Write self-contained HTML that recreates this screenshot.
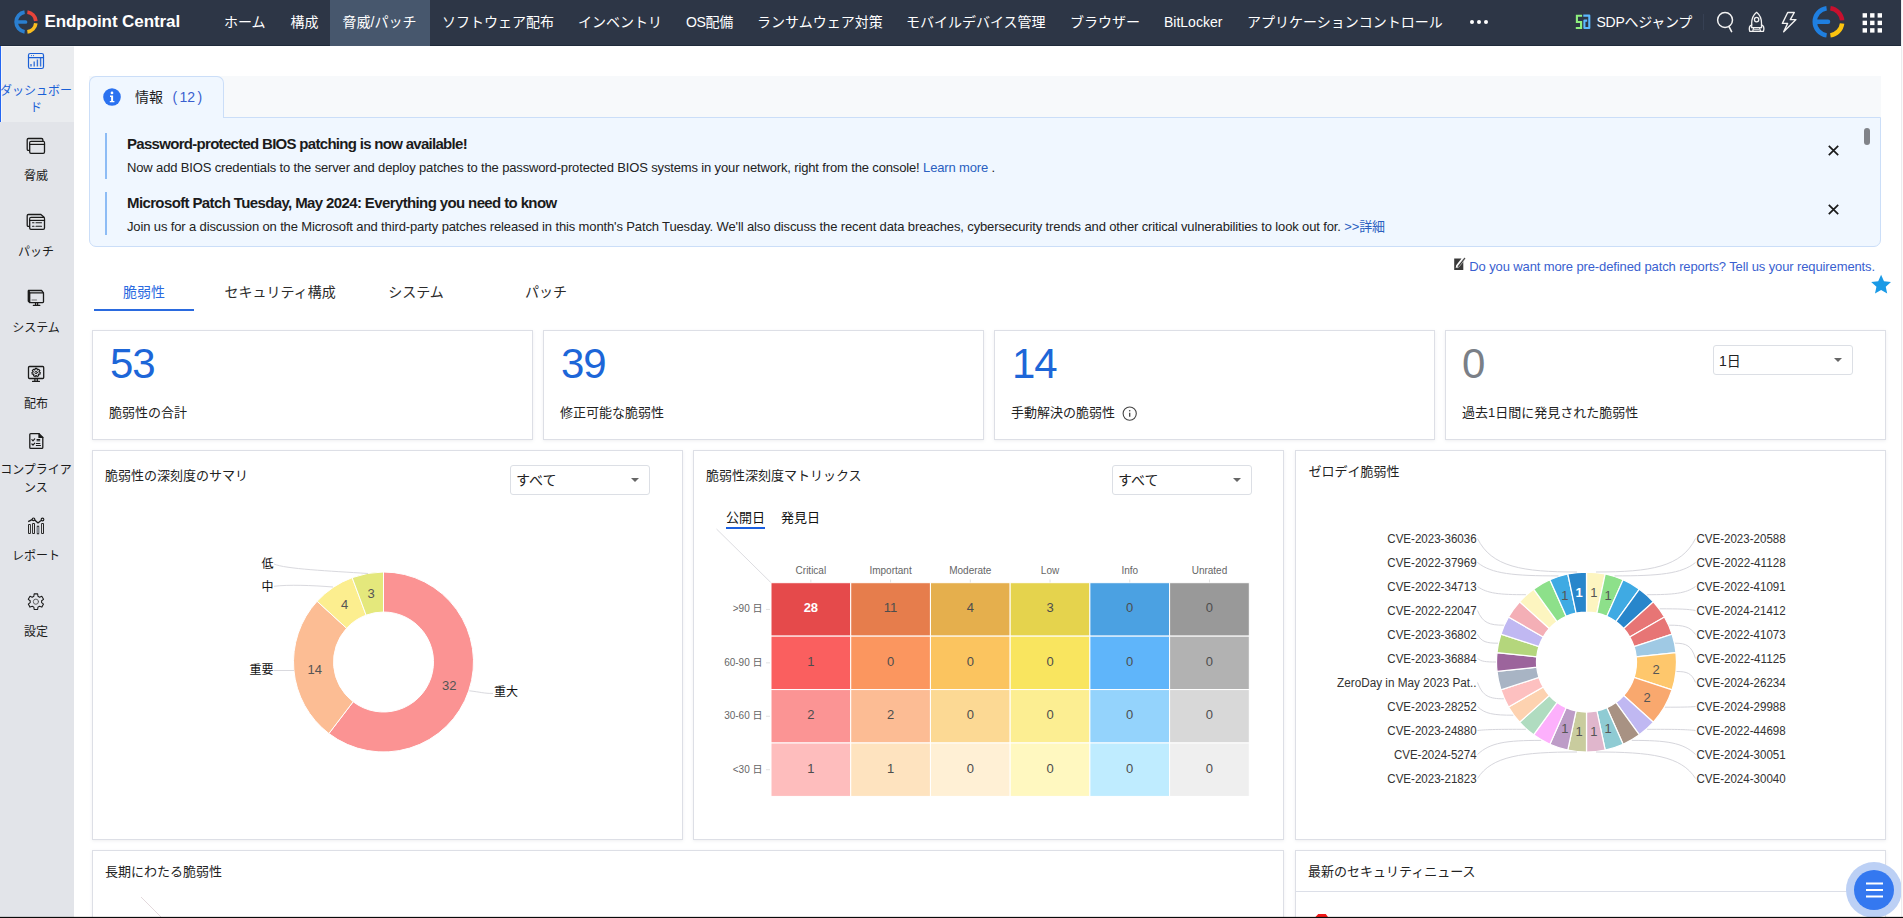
<!DOCTYPE html>
<html lang="ja"><head><meta charset="utf-8"><title>Endpoint Central</title>
<style>
html,body{margin:0;padding:0}
body{width:1903px;height:918px;overflow:hidden;position:relative;background:#fff;font-family:"Liberation Sans","Noto Sans CJK JP",sans-serif;font-size:13px;color:#222;-webkit-font-smoothing:antialiased}
.a{position:absolute}
.t{position:absolute;white-space:nowrap;line-height:20px;height:20px}
.nav{left:0;top:0;width:1901px;height:45px;background:#2d3646;border-bottom:1px solid #1f2a3a}
.nav .t{color:#fff;font-size:14px;line-height:20px}
.side{left:0;top:46px;width:74px;height:872px;background:#e2e4e9}
.side .t{font-size:12px;color:#1b1b1b;width:72px;text-align:center;left:0}
.card{position:absolute;background:#fff;border:1px solid #dddfe6;box-shadow:0 1px 3px rgba(120,130,150,.13);box-sizing:border-box}
.sel{position:absolute;box-sizing:border-box;border:1px solid #dcdfe5;border-radius:3px;background:#fff}
.sel i{position:absolute;width:0;height:0;border-left:4px solid transparent;border-right:4px solid transparent;border-top:4.5px solid #666}
svg{position:absolute;overflow:visible}
</style></head><body>
<div class="a nav">
<div class="a" style="left:330px;top:0;width:100px;height:46px;background:#47576d"></div>
<svg class="a" style="left:0;top:0" width="1" height="1"><path d="M24.62 12.20 A9.9 9.9 0 0 0 24.62 31.80" fill="none" stroke="#2a7fd0" stroke-width="3.7"/><path d="M17.95 22.00 H25.50" fill="none" stroke="#2a7fd0" stroke-width="3.7" stroke-linecap="round"/><path d="M27.38 12.20 A9.9 9.9 0 0 1 35.85 20.97" fill="none" stroke="#e8443a" stroke-width="3.7"/><path d="M35.83 23.21 A9.9 9.9 0 0 1 27.38 31.80" fill="none" stroke="#f9bd1f" stroke-width="3.7"/></svg>
<div class="t" style="letter-spacing:-0.085px;left:44.5px;top:9.7px;font-size:17px;line-height:24px;height:24px;color:#fff;font-weight:bold;">Endpoint Central</div>
<div class="t" style="left:224px;top:11.5px;font-size:14px;">ホーム</div>
<div class="t" style="left:290.5px;top:11.5px;font-size:14px;">構成</div>
<div class="t" style="left:342.5px;top:11.5px;font-size:14px;">脅威/パッチ</div>
<div class="t" style="left:442px;top:11.5px;font-size:14px;">ソフトウェア配布</div>
<div class="t" style="left:578px;top:11.5px;font-size:14px;">インベントリ</div>
<div class="t" style="letter-spacing:-0.309px;left:686px;top:11.5px;font-size:14px;">OS配備</div>
<div class="t" style="left:757px;top:11.5px;font-size:14px;">ランサムウェア対策</div>
<div class="t" style="left:906px;top:11.5px;font-size:14px;">モバイルデバイス管理</div>
<div class="t" style="left:1070px;top:11.5px;font-size:14px;">ブラウザー</div>
<div class="t" style="left:1164px;top:11.5px;font-size:14px;">BitLocker</div>
<div class="t" style="left:1247px;top:11.5px;font-size:14px;">アプリケーションコントロール</div>
<svg class="a" style="left:0;top:0" width="1" height="1"><circle cx="1472" cy="22" r="2" fill="#fff"/><circle cx="1479" cy="22" r="2" fill="#fff"/><circle cx="1486" cy="22" r="2" fill="#fff"/></svg>
<svg class="a" style="left:0;top:0" width="1" height="1" fill="none" stroke-width="2.100"><path d="M1582.100 15.700H1576.900V22H1581.100V28H1575.800" stroke="#8ef07e"/><path d="M1583.300 15.600H1589.300V28H1584.400V20.600H1587.200" stroke="#5cb8ff" stroke-linejoin="round"/></svg>
<div class="t" style="letter-spacing:-0.271px;left:1596.5px;top:11.5px;font-size:14px;">SDPへジャンプ</div>
<div class="a" style="left:1703px;top:14px;width:1px;height:16px;background:#364053"></div>
<svg class="a" style="left:0;top:0" width="1" height="1" fill="none" stroke="#f2f2f2" stroke-linejoin="round" stroke-linecap="round"><circle cx="1725.050" cy="20.050" r="7.450" stroke-width="1.500"/><path d="M1729 26.600L1731.600 31.600" stroke-width="1.600"/><g stroke-width="1.300"><path d="M1756.600 12.300C1753.600 14.800 1751.700 18.800 1751.700 23V27.700H1761.500V23C1761.500 18.800 1759.600 14.800 1756.600 12.300Z"/><circle cx="1756.600" cy="19.600" r="2.200"/><path d="M1751.700 24.800C1749.600 25.600 1748.900 28.300 1749.700 31.300H1752.700L1753.700 27.700M1761.500 24.800C1763.600 25.600 1764.300 28.300 1763.500 31.300H1760.500L1759.500 27.700M1752.700 31.300H1760.500"/><path d="M1754 29.500H1759.200" stroke="#b9bcc2" stroke-width="1.600" stroke-linecap="butt"/></g><path d="M1787.700 12.500H1794.300L1790.300 19.600H1796L1783.700 31.800L1787.600 23.400H1782.400Z" stroke-width="1.400"/></svg>
<svg class="a" style="left:0;top:0" width="1" height="1"><path d="M1826.59 8.23 A13.7 13.7 0 0 0 1826.59 35.37" fill="none" stroke="#1f7fe0" stroke-width="4.5"/><path d="M1817.05 21.80 H1828.00" fill="none" stroke="#1f7fe0" stroke-width="4.5" stroke-linecap="round"/><path d="M1830.41 8.23 A13.7 13.7 0 0 1 1842.12 20.37" fill="none" stroke="#c8102e" stroke-width="4.5"/><path d="M1842.10 23.47 A13.7 13.7 0 0 1 1830.41 35.37" fill="none" stroke="#fcc40f" stroke-width="4.5"/></svg>
<svg class="a" style="left:0;top:0" width="1" height="1"><rect x="1862.6" y="13.2" width="4.4" height="4.4" fill="#fff"/><rect x="1870.1" y="13.2" width="4.4" height="4.4" fill="#fff"/><rect x="1877.6" y="13.2" width="4.4" height="4.4" fill="#fff"/><rect x="1862.6" y="20.7" width="4.4" height="4.4" fill="#fff"/><rect x="1870.1" y="20.7" width="4.4" height="4.4" fill="#fff"/><rect x="1877.6" y="20.7" width="4.4" height="4.4" fill="#fff"/><rect x="1862.6" y="28.2" width="4.4" height="4.4" fill="#fff"/><rect x="1870.1" y="28.2" width="4.4" height="4.4" fill="#fff"/><rect x="1877.6" y="28.2" width="4.4" height="4.4" fill="#fff"/></svg>
</div>
<div class="a side"></div>
<div class="a" style="left:0;top:46px;width:74px;height:76px;box-sizing:border-box;background:#eaecef;border-left:1px solid #2466f2;box-shadow:inset 1px 1px 0 #f5f6f8"></div>
<div class="a side" style="background:none">
<div class="t" style="left:0px;top:36.5px;font-size:12px;line-height:16px;height:16px;color:#1a5fd6;">ダッシュボー</div>
<div class="t" style="left:0px;top:54.0px;font-size:12px;line-height:16px;height:16px;color:#1a5fd6;">ド</div>
<div class="t" style="left:0px;top:121.5px;font-size:12px;line-height:16px;height:16px;">脅威</div>
<div class="t" style="left:0px;top:197.7px;font-size:12px;line-height:16px;height:16px;">パッチ</div>
<div class="t" style="left:0px;top:274.0px;font-size:12px;line-height:16px;height:16px;">システム</div>
<div class="t" style="left:0px;top:350.0px;font-size:12px;line-height:16px;height:16px;">配布</div>
<div class="t" style="left:0px;top:416.0px;font-size:12px;line-height:16px;height:16px;">コンプライア</div>
<div class="t" style="left:0px;top:434.0px;font-size:12px;line-height:16px;height:16px;">ンス</div>
<div class="t" style="left:0px;top:502.0px;font-size:12px;line-height:16px;height:16px;">レポート</div>
<div class="t" style="left:0px;top:578.0px;font-size:12px;line-height:16px;height:16px;">設定</div>
</div>
<svg class="a" style="left:0;top:0" width="74" height="918" viewBox="0 0 74 918" fill="none" stroke-linejoin="round" stroke-linecap="round">
<g stroke="#1a5fd6" stroke-width="1.200"><rect x="28.500" y="53.500" width="15" height="15" rx="1.800"/><path d="M28.500 57.700h15"/><path d="M31.400 55.600h.1M33.400 55.600h.1" stroke-width="1"/><path d="M31 66.500v-2.500M34.200 66.500v-5M37.400 66.500v-7M40.600 66.500v-8.500" stroke-width="1.400" stroke-linecap="butt" opacity=".85"/></g>
<g stroke="#1b1b1b" stroke-width="1.300"><path d="M29.400 150.400h-1a1.200 1.200 0 0 1-1.200-1.200v-9.500a1.200 1.200 0 0 1 1.200-1.200h13a1.500 1.500 0 0 1 1.500 1.500v1.200"/><rect x="29.700" y="141.500" width="14.800" height="11.800" rx="1.300"/><rect x="30.400" y="142.200" width="13.400" height="1.600" fill="#fff" stroke="none" opacity=".8"/><path d="M29.700 144.300h14.800"/></g>
<g stroke="#1b1b1b" stroke-width="1.300"><path d="M29.400 226.400h-1a1.200 1.200 0 0 1-1.200-1.200v-9.500a1.200 1.200 0 0 1 1.200-1.200h12.500l3.200 2.800"/><rect x="29.700" y="217.500" width="14.800" height="11.800" rx="1.300"/><rect x="30.400" y="218.200" width="13.400" height="1.600" fill="#fff" stroke="none" opacity=".8"/><path d="M29.700 220.300h14.800"/><path d="M32.500 222.700h1.500M36 222.700h5.500M32.500 226.300h1.500M36 226.300h5.500" stroke-width="1.100"/></g>
<g stroke="#1b1b1b" stroke-width="1.300"><rect x="29.700" y="292.800" width="13.800" height="9.800" rx=".8"/><path d="M29.700 292.800l-1.300-1.300v9.800l1.300 1.300M28.400 290.500h13.200l1.900 2.300M28.400 290.500v1" /><path d="M28.800 291.500v9.500" stroke-width="1.900"/><path d="M35.600 302.600v2.600M37.600 302.600v2.600M33.400 305.400h6.400"/><path d="M32 300h4.500" stroke-width="1" opacity=".6"/></g>
<g stroke="#1b1b1b" stroke-width="1.300"><rect x="28.500" y="366.500" width="15.200" height="12" rx="1"/><path d="M34.900 378.500v2.700M37.300 378.500v2.700M32.600 381.400h6.800"/><path d="M35.04 369.69 L35.18 368.40 L37.02 368.40 L37.16 369.69 L37.64 369.92 L38.73 369.23 L39.88 370.66 L38.95 371.58 L39.07 372.09 L40.30 372.52 L39.89 374.31 L38.60 374.16 L38.27 374.57 L38.70 375.80 L37.05 376.59 L36.37 375.49 L35.83 375.49 L35.15 376.59 L33.50 375.80 L33.93 374.57 L33.60 374.16 L32.31 374.31 L31.90 372.52 L33.13 372.09 L33.25 371.58 L32.32 370.66 L33.47 369.23 L34.56 369.92Z" stroke-width="1.100"/><circle cx="36.100" cy="372.500" r="1.200" stroke-width=".9"/></g>
<g stroke="#1b1b1b" stroke-width="1.300"><path d="M30.800 433.600h8.200l3.800 3.800v10a1 1 0 0 1-1 1h-11a1 1 0 0 1-1-1v-12.800a1 1 0 0 1 1-1z"/><path d="M39 433.600v3.800h3.800" fill="#1b1b1b"/><path d="M31.900 439.700l1.100 1.100 1.700-1.900M31.900 444l1.100 1.100 1.700-1.900" stroke-width="1.200"/><path d="M37 439.500h2.800M37 440.800h2.800M36.300 443.500h3.600M36.300 445.500h4.200" stroke-width="1"/></g>
<g stroke="#1b1b1b" stroke-width=".950" stroke-linecap="butt"><rect x="28.500" y="524.500" width="1.900" height="9" fill="#f4f5f7"/><rect x="32.600" y="523.500" width="1.900" height="10" fill="#f4f5f7"/><rect x="36.500" y="526.300" width="3" height="7.400" rx=".8" fill="#868991" stroke="none"/><path d="M36.900 526.200h2.200M36.900 533.700h2.200" stroke-width="1.100"/><rect x="41.600" y="523.500" width="1.900" height="10" fill="#f4f5f7"/><path d="M28.200 521.600l3.900-2M34.700 520.100l3.300 2.800 3-2.300" stroke-width="1.300"/><circle cx="33.500" cy="519.300" r="1.350" stroke-width="1.100"/><circle cx="42.500" cy="519.500" r="1.350" stroke-width="1.100"/></g>
<g stroke="#1b1b1b" stroke-width="1.050"><path d="M33.86 596.27 L34.15 593.89 L37.65 593.89 L37.94 596.27 L39.58 597.22 L41.79 596.28 L43.53 599.31 L41.62 600.76 L41.62 602.64 L43.53 604.09 L41.79 607.12 L39.58 606.18 L37.94 607.13 L37.65 609.51 L34.15 609.51 L33.86 607.13 L32.22 606.18 L30.01 607.12 L28.27 604.09 L30.18 602.64 L30.18 600.76 L28.27 599.31 L30.01 596.28 L32.22 597.22Z" stroke-linejoin="round"/><circle cx="35.900" cy="601.700" r="2.600" stroke="#555" stroke-width=".9"/></g>
</svg>
<div class="a" style="left:89px;top:76px;width:1792px;height:42px;background:#f7f9fb"></div>
<div class="a" style="left:89px;top:117px;width:1792px;height:130px;box-sizing:border-box;background:#f0f7ff;border:1px solid #cbdef8;border-radius:0 0 7px 7px"></div>
<div class="a" style="left:89px;top:76px;width:135px;height:42px;box-sizing:border-box;background:#f0f7ff;border:1px solid #cbdef8;border-bottom:none;border-radius:7px 7px 0 0"></div>
<div class="a" style="left:90px;top:116px;width:133px;height:3px;background:#f0f7ff"></div>
<svg class="a" style="left:103.400px;top:88.300px" width="18" height="18" viewBox="0 0 18 18"><circle cx="9" cy="9" r="8.800" fill="#2b72f0"/><circle cx="9" cy="4.900" r="1.350" fill="#fff"/><path d="M7 7.600h3.100v5.400h1.300v1.300H6.800V13h1.300V8.900H7z" fill="#fff"/></svg>
<div class="t" style="left:135px;top:86.5px;font-size:14px;color:#222;">情報</div>
<div class="t" style="left:172.5px;top:86.5px;font-size:14px;color:#3a5fcf;word-spacing:-1.500px">( 12 )</div>
<div class="a" style="left:105px;top:133px;width:2px;height:46px;background:#8dbcf5"></div>
<div class="a" style="left:105px;top:192px;width:2px;height:43px;background:#8dbcf5"></div>
<div class="t" style="letter-spacing:-0.702px;left:127px;top:133.5px;font-size:15px;color:#1b1b1b;font-weight:bold;">Password-protected BIOS patching is now available!</div>
<div class="t" style="letter-spacing:-0.143px;left:127px;top:157.5px;font-size:13px;color:#222;">Now add BIOS credentials to the server and deploy patches to the password-protected BIOS systems in your network, right from the console! <span style="color:#2a5fc0">Learn more</span> .</div>
<div class="t" style="letter-spacing:-0.619px;left:127px;top:192.5px;font-size:15px;color:#1b1b1b;font-weight:bold;">Microsoft Patch Tuesday, May 2024: Everything you need to know</div>
<div class="t" style="letter-spacing:-0.131px;left:127px;top:216.5px;font-size:13px;color:#222;">Join us for a discussion on the Microsoft and third-party patches released in this month's Patch Tuesday. We'll also discuss the recent data breaches, cybersecurity trends and other critical vulnerabilities to look out for. <span style="color:#2a5fc0">&gt;&gt;詳細</span></div>
<svg class="a" style="left:1828.4px;top:144.5px" width="11" height="11" viewBox="0 0 11 11"><path d="M.8.800l9.400 9.400M10.200.800L.8 10.200" stroke="#1b1b1b" stroke-width="1.700"/></svg>
<svg class="a" style="left:1828.4px;top:203.7px" width="11" height="11" viewBox="0 0 11 11"><path d="M.8.800l9.400 9.400M10.200.800L.8 10.200" stroke="#1b1b1b" stroke-width="1.700"/></svg>
<div class="a" style="left:1864px;top:128px;width:6px;height:17px;border-radius:3px;background:#808389"></div>
<svg class="a" style="left:1453px;top:257px" width="13" height="14" viewBox="0 0 13 14"><path d="M1.200 1.500h7.300l-5.300 6.800-.5 2.800 2.600-1.200 5-6.300v9.400h-9.100z" fill="#3a3a3a"/><path d="M11.300.600l1.300 1-6.600 8.400-1.800.8.400-1.900z" fill="#3a3a3a" stroke="#fff" stroke-width=".5"/></svg>
<div class="t" style="letter-spacing:-0.116px;left:1469.3px;top:257.0px;font-size:13px;color:#3a5fd0;">Do you want more pre-defined patch reports? Tell us your requirements.</div>
<svg class="a" style="left:0;top:0" width="1" height="1"><polygon points="1881.10,274.80 1883.98,281.24 1890.99,281.99 1885.76,286.71 1887.21,293.61 1881.10,290.10 1874.99,293.61 1876.44,286.71 1871.21,281.99 1878.22,281.24" fill="#1a9ae6"/></svg>
<div class="t" style="left:94px;top:282.0px;font-size:14px;color:#2a6adf;width:100px;text-align:center;">脆弱性</div>
<div class="t" style="left:224.5px;top:282.0px;font-size:14px;color:#2b2b2b;">セキュリティ構成</div>
<div class="t" style="left:366px;top:282.0px;font-size:14px;color:#2b2b2b;width:100px;text-align:center;">システム</div>
<div class="t" style="left:496px;top:282.0px;font-size:14px;color:#2b2b2b;width:100px;text-align:center;">パッチ</div>
<div class="a" style="left:94px;top:308.500px;width:99.500px;height:2px;background:#2a6adf"></div>
<div class="card" style="left:92px;top:330px;width:441px;height:109.500px"></div>
<div class="t" style="left:110px;top:341.5px;font-size:42px;line-height:44px;height:44px;color:#1d66d8;letter-spacing:-1px;">53</div>
<div class="t" style="left:109px;top:402.8px;font-size:13px;color:#222;">脆弱性の合計</div>
<div class="card" style="left:543px;top:330px;width:441px;height:109.500px"></div>
<div class="t" style="left:561px;top:341.5px;font-size:42px;line-height:44px;height:44px;color:#1d66d8;letter-spacing:-1px;">39</div>
<div class="t" style="left:560px;top:402.8px;font-size:13px;color:#222;">修正可能な脆弱性</div>
<div class="card" style="left:994px;top:330px;width:441px;height:109.500px"></div>
<div class="t" style="left:1012px;top:341.5px;font-size:42px;line-height:44px;height:44px;color:#1d66d8;letter-spacing:-1px;">14</div>
<div class="t" style="left:1011px;top:402.8px;font-size:13px;color:#222;">手動解決の脆弱性</div>
<div class="card" style="left:1445px;top:330px;width:441px;height:109.500px"></div>
<div class="t" style="left:1462px;top:341.5px;font-size:42px;line-height:44px;height:44px;color:#7a7f87;letter-spacing:-1px;">0</div>
<div class="t" style="left:1462px;top:402.8px;font-size:13px;color:#222;">過去1日間に発見された脆弱性</div>
<svg class="a" style="left:1122px;top:406px" width="16" height="16" viewBox="0 0 16 16"><circle cx="7.700" cy="7.600" r="6.600" fill="none" stroke="#444" stroke-width="1.100"/><path d="M7.700 6.800v4" stroke="#444" stroke-width="1.300"/><circle cx="7.700" cy="4.700" r=".8" fill="#444"/></svg>
<div class="sel" style="left:1713px;top:345px;width:140px;height:30px"><i style="right:10px;top:12.0px"></i></div>
<div class="t" style="left:1719px;top:350.8px;font-size:14px;color:#222;">1日</div>
<div class="card" style="left:92px;top:450px;width:591px;height:390px"></div>
<div class="card" style="left:693px;top:450px;width:591px;height:390px"></div>
<div class="card" style="left:1295px;top:450px;width:591px;height:390px"></div>
<div class="t" style="left:105px;top:466.3px;font-size:13px;color:#222;">脆弱性の深刻度のサマリ</div>
<div class="t" style="left:706px;top:466.3px;font-size:13px;color:#222;">脆弱性深刻度マトリックス</div>
<div class="t" style="left:1308.5px;top:462.4px;font-size:13px;color:#222;">ゼロデイ脆弱性</div>
<div class="sel" style="left:510px;top:465px;width:140px;height:30px"><i style="right:10px;top:12.0px"></i></div>
<div class="t" style="left:516px;top:469.8px;font-size:14px;color:#222;">すべて</div>
<div class="sel" style="left:1112px;top:465px;width:140px;height:30px"><i style="right:10px;top:12.0px"></i></div>
<div class="t" style="left:1118px;top:469.8px;font-size:14px;color:#222;">すべて</div>
<svg class="a" style="left:0;top:0" width="1903" height="918" viewBox="0 0 1903 918" font-family='"Liberation Sans","Noto Sans CJK JP",sans-serif'>
<path d="M383.50 572.00 A90 90 0 1 1 328.89 733.54 L353.16 701.74 A50 50 0 1 0 383.50 612.00 Z" fill="#fb9393" stroke="#fff" stroke-width="1"/>
<path d="M328.89 733.54 A90 90 0 0 1 317.10 601.25 L346.61 628.25 A50 50 0 0 0 353.16 701.74 Z" fill="#fcbd94" stroke="#fff" stroke-width="1"/>
<path d="M317.10 601.25 A90 90 0 0 1 352.16 577.63 L366.09 615.13 A50 50 0 0 0 346.61 628.25 Z" fill="#fcee8f" stroke="#fff" stroke-width="1"/>
<path d="M352.16 577.63 A90 90 0 0 1 383.50 572.00 L383.50 612.00 A50 50 0 0 0 366.09 615.13 Z" fill="#e4e87c" stroke="#fff" stroke-width="1"/>
<g fill="none" stroke="#d9d9de" stroke-width="1"><path d="M469.300 690.800C480 692 484 693.500 493 693.500"/><path d="M274 670.500H294"/><path d="M274 586.300C288 584.500 312 585.300 333 587"/><path d="M274 564C285 569 330 571 368 573.500"/></g>
<text x="449.3" y="689.5" font-size="13" fill="#555" text-anchor="middle">32</text><text x="314.7" y="673.6" font-size="13" fill="#555" text-anchor="middle">14</text><text x="344.6" y="608.6" font-size="13" fill="#555" text-anchor="middle">4</text><text x="371" y="598.0" font-size="13" fill="#555" text-anchor="middle">3</text><text x="494" y="696.4" font-size="12" fill="#111" text-anchor="start">重大</text><text x="273.5" y="674.4" font-size="12" fill="#111" text-anchor="end">重要</text><text x="273.5" y="590.8" font-size="12" fill="#111" text-anchor="end">中</text><text x="273.5" y="567.6999999999999" font-size="12" fill="#111" text-anchor="end">低</text>
<path d="M716.500 529L771 582.700" stroke="#dcdce0" stroke-width="1" fill="none"/>
<rect x="771.00" y="582.70" width="79.72" height="53.43" fill="#e54a4b" stroke="#fff" stroke-width="1"/><text x="810.86" y="612.22" font-size="13" font-weight="bold" fill="#fff" text-anchor="middle">28</text><rect x="850.72" y="582.70" width="79.72" height="53.43" fill="#e67d4c" stroke="#fff" stroke-width="1"/><text x="890.58" y="612.22" font-size="13" fill="#4d4d4d" text-anchor="middle">11</text><rect x="930.44" y="582.70" width="79.72" height="53.43" fill="#e5af4d" stroke="#fff" stroke-width="1"/><text x="970.30" y="612.22" font-size="13" fill="#4d4d4d" text-anchor="middle">4</text><rect x="1010.16" y="582.70" width="79.72" height="53.43" fill="#e5d34d" stroke="#fff" stroke-width="1"/><text x="1050.02" y="612.22" font-size="13" fill="#4d4d4d" text-anchor="middle">3</text><rect x="1089.88" y="582.70" width="79.72" height="53.43" fill="#4ba1e2" stroke="#fff" stroke-width="1"/><text x="1129.74" y="612.22" font-size="13" fill="#4d4d4d" text-anchor="middle">0</text><rect x="1169.60" y="582.70" width="79.72" height="53.43" fill="#999999" stroke="#fff" stroke-width="1"/><text x="1209.46" y="612.22" font-size="13" fill="#4d4d4d" text-anchor="middle">0</text>
<rect x="771.00" y="636.13" width="79.72" height="53.43" fill="#fa5f5f" stroke="#fff" stroke-width="1"/><text x="810.86" y="665.64" font-size="13" fill="#4d4d4d" text-anchor="middle">1</text><rect x="850.72" y="636.13" width="79.72" height="53.43" fill="#fb965f" stroke="#fff" stroke-width="1"/><text x="890.58" y="665.64" font-size="13" fill="#4d4d4d" text-anchor="middle">0</text><rect x="930.44" y="636.13" width="79.72" height="53.43" fill="#fbc45f" stroke="#fff" stroke-width="1"/><text x="970.30" y="665.64" font-size="13" fill="#4d4d4d" text-anchor="middle">0</text><rect x="1010.16" y="636.13" width="79.72" height="53.43" fill="#f9e55f" stroke="#fff" stroke-width="1"/><text x="1050.02" y="665.64" font-size="13" fill="#4d4d4d" text-anchor="middle">0</text><rect x="1089.88" y="636.13" width="79.72" height="53.43" fill="#5fb5fa" stroke="#fff" stroke-width="1"/><text x="1129.74" y="665.64" font-size="13" fill="#4d4d4d" text-anchor="middle">0</text><rect x="1169.60" y="636.13" width="79.72" height="53.43" fill="#b2b2b2" stroke="#fff" stroke-width="1"/><text x="1209.46" y="665.64" font-size="13" fill="#4d4d4d" text-anchor="middle">0</text>
<rect x="771.00" y="689.56" width="79.72" height="53.43" fill="#fb9494" stroke="#fff" stroke-width="1"/><text x="810.86" y="719.08" font-size="13" fill="#4d4d4d" text-anchor="middle">2</text><rect x="850.72" y="689.56" width="79.72" height="53.43" fill="#fcbc94" stroke="#fff" stroke-width="1"/><text x="890.58" y="719.08" font-size="13" fill="#4d4d4d" text-anchor="middle">2</text><rect x="930.44" y="689.56" width="79.72" height="53.43" fill="#fcd994" stroke="#fff" stroke-width="1"/><text x="970.30" y="719.08" font-size="13" fill="#4d4d4d" text-anchor="middle">0</text><rect x="1010.16" y="689.56" width="79.72" height="53.43" fill="#fcee92" stroke="#fff" stroke-width="1"/><text x="1050.02" y="719.08" font-size="13" fill="#4d4d4d" text-anchor="middle">0</text><rect x="1089.88" y="689.56" width="79.72" height="53.43" fill="#94d3fc" stroke="#fff" stroke-width="1"/><text x="1129.74" y="719.08" font-size="13" fill="#4d4d4d" text-anchor="middle">0</text><rect x="1169.60" y="689.56" width="79.72" height="53.43" fill="#d8d8d8" stroke="#fff" stroke-width="1"/><text x="1209.46" y="719.08" font-size="13" fill="#4d4d4d" text-anchor="middle">0</text>
<rect x="771.00" y="742.99" width="79.72" height="53.43" fill="#febdbd" stroke="#fff" stroke-width="1"/><text x="810.86" y="772.50" font-size="13" fill="#4d4d4d" text-anchor="middle">1</text><rect x="850.72" y="742.99" width="79.72" height="53.43" fill="#fee3bf" stroke="#fff" stroke-width="1"/><text x="890.58" y="772.50" font-size="13" fill="#4d4d4d" text-anchor="middle">1</text><rect x="930.44" y="742.99" width="79.72" height="53.43" fill="#fff0d5" stroke="#fff" stroke-width="1"/><text x="970.30" y="772.50" font-size="13" fill="#4d4d4d" text-anchor="middle">0</text><rect x="1010.16" y="742.99" width="79.72" height="53.43" fill="#fff8c0" stroke="#fff" stroke-width="1"/><text x="1050.02" y="772.50" font-size="13" fill="#4d4d4d" text-anchor="middle">0</text><rect x="1089.88" y="742.99" width="79.72" height="53.43" fill="#bfecff" stroke="#fff" stroke-width="1"/><text x="1129.74" y="772.50" font-size="13" fill="#4d4d4d" text-anchor="middle">0</text><rect x="1169.60" y="742.99" width="79.72" height="53.43" fill="#efefef" stroke="#fff" stroke-width="1"/><text x="1209.46" y="772.50" font-size="13" fill="#4d4d4d" text-anchor="middle">0</text>
<text x="810.86" y="574" font-size="10" fill="#666" text-anchor="middle">Critical</text><path d="M810.86 579.500v3" stroke="#e2e2e2" stroke-width="1"/><text x="890.58" y="574" font-size="10" fill="#666" text-anchor="middle">Important</text><path d="M890.58 579.500v3" stroke="#e2e2e2" stroke-width="1"/><text x="970.30" y="574" font-size="10" fill="#666" text-anchor="middle">Moderate</text><path d="M970.30 579.500v3" stroke="#e2e2e2" stroke-width="1"/><text x="1050.02" y="574" font-size="10" fill="#666" text-anchor="middle">Low</text><path d="M1050.02 579.500v3" stroke="#e2e2e2" stroke-width="1"/><text x="1129.74" y="574" font-size="10" fill="#666" text-anchor="middle">Info</text><path d="M1129.74 579.500v3" stroke="#e2e2e2" stroke-width="1"/><text x="1209.46" y="574" font-size="10" fill="#666" text-anchor="middle">Unrated</text><path d="M1209.46 579.500v3" stroke="#e2e2e2" stroke-width="1"/><text x="762.500" y="612.22" font-size="10" fill="#666" text-anchor="end">&gt;90 日</text><path d="M766 609.42h4" stroke="#e2e2e2" stroke-width="1"/><text x="762.500" y="665.64" font-size="10" fill="#666" text-anchor="end">60-90 日</text><path d="M766 662.85h4" stroke="#e2e2e2" stroke-width="1"/><text x="762.500" y="719.08" font-size="10" fill="#666" text-anchor="end">30-60 日</text><path d="M766 716.28h4" stroke="#e2e2e2" stroke-width="1"/><text x="762.500" y="772.50" font-size="10" fill="#666" text-anchor="end">&lt;30 日</text><path d="M766 769.71h4" stroke="#e2e2e2" stroke-width="1"/>
<path d="M1586.50 572.00 A90 90 0 0 1 1605.21 573.97 L1596.90 613.09 A50 50 0 0 0 1586.50 612.00 Z" fill="#fdf5c0" stroke="#fff" stroke-width="1.250"/><path d="M1605.21 573.97 A90 90 0 0 1 1623.11 579.78 L1606.84 616.32 A50 50 0 0 0 1596.90 613.09 Z" fill="#8de08a" stroke="#fff" stroke-width="1.250"/><path d="M1623.11 579.78 A90 90 0 0 1 1639.40 589.19 L1615.89 621.55 A50 50 0 0 0 1606.84 616.32 Z" fill="#3faae3" stroke="#fff" stroke-width="1.250"/><path d="M1639.40 589.19 A90 90 0 0 1 1653.38 601.78 L1623.66 628.54 A50 50 0 0 0 1615.89 621.55 Z" fill="#2886cb" stroke="#fff" stroke-width="1.250"/><path d="M1653.38 601.78 A90 90 0 0 1 1664.44 617.00 L1629.80 637.00 A50 50 0 0 0 1623.66 628.54 Z" fill="#e77575" stroke="#fff" stroke-width="1.250"/><path d="M1664.44 617.00 A90 90 0 0 1 1672.10 634.19 L1634.05 646.55 A50 50 0 0 0 1629.80 637.00 Z" fill="#e77575" stroke="#fff" stroke-width="1.250"/><path d="M1672.10 634.19 A90 90 0 0 1 1676.01 652.59 L1636.23 656.77 A50 50 0 0 0 1634.05 646.55 Z" fill="#9fc9e4" stroke="#fff" stroke-width="1.250"/><path d="M1676.01 652.59 A90 90 0 0 1 1672.10 689.81 L1634.05 677.45 A50 50 0 0 0 1636.23 656.77 Z" fill="#fec76c" stroke="#fff" stroke-width="1.250"/><path d="M1672.10 689.81 A90 90 0 0 1 1653.38 722.22 L1623.66 695.46 A50 50 0 0 0 1634.05 677.45 Z" fill="#f9a86e" stroke="#fff" stroke-width="1.250"/><path d="M1653.38 722.22 A90 90 0 0 1 1639.40 734.81 L1615.89 702.45 A50 50 0 0 0 1623.66 695.46 Z" fill="#c0b8f2" stroke="#fff" stroke-width="1.250"/><path d="M1639.40 734.81 A90 90 0 0 1 1623.11 744.22 L1606.84 707.68 A50 50 0 0 0 1615.89 702.45 Z" fill="#a89283" stroke="#fff" stroke-width="1.250"/><path d="M1623.11 744.22 A90 90 0 0 1 1605.21 750.03 L1596.90 710.91 A50 50 0 0 0 1606.84 707.68 Z" fill="#8fcbd3" stroke="#fff" stroke-width="1.250"/><path d="M1605.21 750.03 A90 90 0 0 1 1586.50 752.00 L1586.50 712.00 A50 50 0 0 0 1596.90 710.91 Z" fill="#e0b6cc" stroke="#fff" stroke-width="1.250"/><path d="M1586.50 752.00 A90 90 0 0 1 1567.79 750.03 L1576.10 710.91 A50 50 0 0 0 1586.50 712.00 Z" fill="#c9cc9e" stroke="#fff" stroke-width="1.250"/><path d="M1567.79 750.03 A90 90 0 0 1 1549.89 744.22 L1566.16 707.68 A50 50 0 0 0 1576.10 710.91 Z" fill="#bd9cc7" stroke="#fff" stroke-width="1.250"/><path d="M1549.89 744.22 A90 90 0 0 1 1533.60 734.81 L1557.11 702.45 A50 50 0 0 0 1566.16 707.68 Z" fill="#fdb0fc" stroke="#fff" stroke-width="1.250"/><path d="M1533.60 734.81 A90 90 0 0 1 1519.62 722.22 L1549.34 695.46 A50 50 0 0 0 1557.11 702.45 Z" fill="#b0dcc0" stroke="#fff" stroke-width="1.250"/><path d="M1519.62 722.22 A90 90 0 0 1 1508.56 707.00 L1543.20 687.00 A50 50 0 0 0 1549.34 695.46 Z" fill="#fdd2b0" stroke="#fff" stroke-width="1.250"/><path d="M1508.56 707.00 A90 90 0 0 1 1500.90 689.81 L1538.95 677.45 A50 50 0 0 0 1543.20 687.00 Z" fill="#fdc0c0" stroke="#fff" stroke-width="1.250"/><path d="M1500.90 689.81 A90 90 0 0 1 1496.99 671.41 L1536.77 667.23 A50 50 0 0 0 1538.95 677.45 Z" fill="#a8b4c4" stroke="#fff" stroke-width="1.250"/><path d="M1496.99 671.41 A90 90 0 0 1 1496.99 652.59 L1536.77 656.77 A50 50 0 0 0 1536.77 667.23 Z" fill="#9c649c" stroke="#fff" stroke-width="1.250"/><path d="M1496.99 652.59 A90 90 0 0 1 1500.90 634.19 L1538.95 646.55 A50 50 0 0 0 1536.77 656.77 Z" fill="#b4d67c" stroke="#fff" stroke-width="1.250"/><path d="M1500.90 634.19 A90 90 0 0 1 1508.56 617.00 L1543.20 637.00 A50 50 0 0 0 1538.95 646.55 Z" fill="#c0b8f2" stroke="#fff" stroke-width="1.250"/><path d="M1508.56 617.00 A90 90 0 0 1 1519.62 601.78 L1549.34 628.54 A50 50 0 0 0 1543.20 637.00 Z" fill="#f4afb6" stroke="#fff" stroke-width="1.250"/><path d="M1519.62 601.78 A90 90 0 0 1 1533.60 589.19 L1557.11 621.55 A50 50 0 0 0 1549.34 628.54 Z" fill="#fdf5c0" stroke="#fff" stroke-width="1.250"/><path d="M1533.60 589.19 A90 90 0 0 1 1549.89 579.78 L1566.16 616.32 A50 50 0 0 0 1557.11 621.55 Z" fill="#8de08a" stroke="#fff" stroke-width="1.250"/><path d="M1549.89 579.78 A90 90 0 0 1 1567.79 573.97 L1576.10 613.09 A50 50 0 0 0 1566.16 616.32 Z" fill="#3faae3" stroke="#fff" stroke-width="1.250"/><path d="M1567.79 573.97 A90 90 0 0 1 1586.50 572.00 L1586.50 612.00 A50 50 0 0 0 1576.10 613.09 Z" fill="#2886cb" stroke="#fff" stroke-width="1.250"/>
<text x="1593.82" y="596.98" font-size="13" fill="#555" text-anchor="middle">1</text><text x="1608.13" y="600.03" font-size="13" fill="#555" text-anchor="middle">1</text><text x="1656.12" y="673.92" font-size="13" fill="#555" text-anchor="middle">2</text><text x="1647.12" y="701.60" font-size="13" fill="#555" text-anchor="middle">2</text><text x="1608.13" y="733.17" font-size="13" fill="#555" text-anchor="middle">1</text><text x="1593.82" y="736.22" font-size="13" fill="#555" text-anchor="middle">1</text><text x="1579.18" y="736.22" font-size="13" fill="#555" text-anchor="middle">1</text><text x="1564.87" y="733.17" font-size="13" fill="#555" text-anchor="middle">1</text><text x="1564.87" y="600.03" font-size="13" fill="#555" text-anchor="middle">1</text><text x="1579.18" y="596.98" font-size="13" font-weight="bold" fill="#fff" text-anchor="middle">1</text>
<g fill="none" stroke="#d6d6dc" stroke-width="1"><path d="M1477.5 538.5C1491.5 567.0 1522.3 572.0 1577.0 572.0"/><path d="M1695.5 538.5C1681.5 567.0 1650.7 572.0 1596.0 572.0"/><path d="M1477.5 562.5C1491.5 573.9 1514.0 575.9 1558.5 575.9"/><path d="M1695.5 562.5C1681.5 573.9 1659.0 575.9 1614.5 575.9"/><path d="M1477.5 586.5C1487.2 593.5 1499.3 594.7 1525.9 594.7"/><path d="M1695.5 586.5C1685.8 593.5 1673.7 594.7 1647.1 594.7"/><path d="M1477.5 610.5C1482.8 623.0 1489.3 625.2 1503.8 625.2"/><path d="M1695.5 610.5C1688.3 609.1 1679.4 608.8 1659.7 608.8"/><path d="M1477.5 634.5C1481.6 641.9 1486.7 643.2 1498.0 643.2"/><path d="M1695.5 634.5C1690.2 626.6 1683.7 625.2 1669.2 625.2"/><path d="M1477.5 658.5C1481.2 661.5 1485.8 662.0 1496.0 662.0"/><path d="M1695.5 658.5C1691.4 645.5 1686.3 643.2 1675.0 643.2"/><path d="M1477.5 682.5C1482.8 696.4 1489.3 698.8 1503.8 698.8"/><path d="M1695.5 682.5C1691.7 673.1 1687.0 671.5 1676.5 671.5"/><path d="M1477.5 706.5C1484.7 713.9 1493.6 715.2 1513.3 715.2"/><path d="M1695.5 706.5C1689.4 707.1 1681.7 707.2 1664.9 707.2"/><path d="M1477.5 730.5C1487.2 729.4 1499.3 729.3 1525.9 729.3"/><path d="M1695.5 730.5C1685.8 729.4 1673.7 729.3 1647.1 729.3"/><path d="M1477.5 754.5C1490.2 742.5 1506.2 740.4 1541.2 740.4"/><path d="M1695.5 754.5C1682.8 742.5 1666.8 740.4 1631.8 740.4"/><path d="M1477.5 778.5C1491.5 756.0 1522.3 752.0 1577.0 752.0"/><path d="M1695.5 778.5C1681.5 756.0 1650.7 752.0 1596.0 752.0"/></g>
<text x="1476.600" y="542.8" font-size="12" fill="#333" text-anchor="end" textLength="89.3" lengthAdjust="spacingAndGlyphs">CVE-2023-36036</text><text x="1696.400" y="542.8" font-size="12" fill="#333" textLength="89.300" lengthAdjust="spacingAndGlyphs">CVE-2023-20588</text><text x="1476.600" y="566.8" font-size="12" fill="#333" text-anchor="end" textLength="89.3" lengthAdjust="spacingAndGlyphs">CVE-2022-37969</text><text x="1696.400" y="566.8" font-size="12" fill="#333" textLength="89.300" lengthAdjust="spacingAndGlyphs">CVE-2022-41128</text><text x="1476.600" y="590.8" font-size="12" fill="#333" text-anchor="end" textLength="89.3" lengthAdjust="spacingAndGlyphs">CVE-2022-34713</text><text x="1696.400" y="590.8" font-size="12" fill="#333" textLength="89.300" lengthAdjust="spacingAndGlyphs">CVE-2022-41091</text><text x="1476.600" y="614.8" font-size="12" fill="#333" text-anchor="end" textLength="89.3" lengthAdjust="spacingAndGlyphs">CVE-2022-22047</text><text x="1696.400" y="614.8" font-size="12" fill="#333" textLength="89.300" lengthAdjust="spacingAndGlyphs">CVE-2024-21412</text><text x="1476.600" y="638.8" font-size="12" fill="#333" text-anchor="end" textLength="89.3" lengthAdjust="spacingAndGlyphs">CVE-2023-36802</text><text x="1696.400" y="638.8" font-size="12" fill="#333" textLength="89.300" lengthAdjust="spacingAndGlyphs">CVE-2022-41073</text><text x="1476.600" y="662.8" font-size="12" fill="#333" text-anchor="end" textLength="89.3" lengthAdjust="spacingAndGlyphs">CVE-2023-36884</text><text x="1696.400" y="662.8" font-size="12" fill="#333" textLength="89.300" lengthAdjust="spacingAndGlyphs">CVE-2022-41125</text><text x="1476.600" y="686.8" font-size="12" fill="#333" text-anchor="end" textLength="139.5" lengthAdjust="spacingAndGlyphs">ZeroDay in May 2023 Pat..</text><text x="1696.400" y="686.8" font-size="12" fill="#333" textLength="89.300" lengthAdjust="spacingAndGlyphs">CVE-2024-26234</text><text x="1476.600" y="710.8" font-size="12" fill="#333" text-anchor="end" textLength="89.3" lengthAdjust="spacingAndGlyphs">CVE-2023-28252</text><text x="1696.400" y="710.8" font-size="12" fill="#333" textLength="89.300" lengthAdjust="spacingAndGlyphs">CVE-2024-29988</text><text x="1476.600" y="734.8" font-size="12" fill="#333" text-anchor="end" textLength="89.3" lengthAdjust="spacingAndGlyphs">CVE-2023-24880</text><text x="1696.400" y="734.8" font-size="12" fill="#333" textLength="89.300" lengthAdjust="spacingAndGlyphs">CVE-2022-44698</text><text x="1476.600" y="758.8" font-size="12" fill="#333" text-anchor="end" textLength="82.7" lengthAdjust="spacingAndGlyphs">CVE-2024-5274</text><text x="1696.400" y="758.8" font-size="12" fill="#333" textLength="89.300" lengthAdjust="spacingAndGlyphs">CVE-2024-30051</text><text x="1476.600" y="782.8" font-size="12" fill="#333" text-anchor="end" textLength="89.3" lengthAdjust="spacingAndGlyphs">CVE-2023-21823</text><text x="1696.400" y="782.8" font-size="12" fill="#333" textLength="89.300" lengthAdjust="spacingAndGlyphs">CVE-2024-30040</text>
</svg>
<div class="t" style="left:726px;top:508.3px;font-size:13px;color:#111;">公開日</div>
<div class="t" style="left:781px;top:508.3px;font-size:13px;color:#111;">発見日</div>
<div class="a" style="left:726px;top:527px;width:39px;height:2px;background:#1a5fe0"></div>
<div class="card" style="left:92px;top:850px;width:1192px;height:120px"></div>
<div class="card" style="left:1295px;top:850px;width:591px;height:120px"></div>
<div class="t" style="left:105px;top:862.3px;font-size:13px;color:#222;">長期にわたる脆弱性</div>
<div class="t" style="left:1308px;top:862.3px;font-size:13px;color:#222;">最新のセキュリティニュース</div>
<div class="a" style="left:1296px;top:891px;width:589px;height:1px;background:#dcdfe8"></div>
<svg class="a" style="left:0;top:0" width="1" height="1"><path d="M141 897L161 917" stroke="#e3d9dc" stroke-width="1"/><polygon points="1318.200,914 1325.800,914 1328.300,917.500 1315,917.500" fill="#f01818"/></svg>
<div class="a" style="left:1846px;top:861.500px;width:56px;height:56px;border-radius:50%;background:#bcd0f5"></div>
<div class="a" style="left:1854px;top:869.500px;width:40px;height:40px;border-radius:50%;background:#3478f0"></div>
<svg class="a" style="left:0;top:0" width="1" height="1"><path d="M1866 883.500h17M1866 890h17M1866 896.500h17" stroke="#fff" stroke-width="2"/></svg>
<div class="a" style="left:1901px;top:0;width:2px;height:918px;background:#fbfbfb;box-shadow:inset 1px 0 0 #ececee"></div>
<div class="a" style="left:0;top:917px;width:1903px;height:1px;background:#0a0a0a;box-shadow:0 -1px 0 rgba(0,0,0,.12)"></div>
</body></html>
